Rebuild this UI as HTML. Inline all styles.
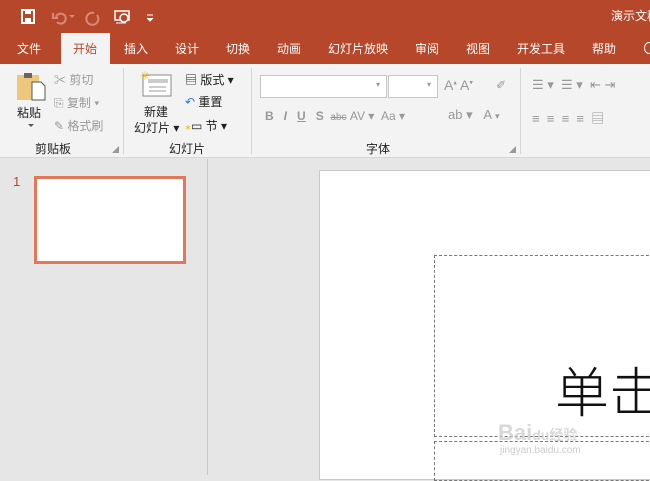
<!DOCTYPE html>
<html><head><meta charset="utf-8"><style>
*{margin:0;padding:0;box-sizing:border-box}
body{width:650px;height:475px;overflow:hidden;position:relative;font-family:"Liberation Sans","Noto Sans CJK SC",sans-serif;background:#e6e6e6}
.a{position:absolute}
.t{font-size:12px;color:#fff;white-space:nowrap}
.r{font-size:12px;color:#222;white-space:nowrap}
.g{font-size:12px;color:#999;white-space:nowrap}
</style></head><body>
<div class="a" style="left:0;top:0;width:650px;height:64px;background:#b7472a"></div>
<svg class="a" style="left:20px;top:8px" width="140" height="18">
<rect x="2" y="2" width="12" height="13" fill="none" stroke="#fff" stroke-width="2"/><rect x="5" y="2" width="6" height="4" fill="#fff"/><rect x="5" y="10" width="6" height="5" fill="#fff"/>
<path d="M36 9 a5 5 0 1 1 1 5 M33 5 v5 h5" fill="none" stroke="#d9897a" stroke-width="2"/>
<path d="M49 7 l3 3 l3-3" fill="#d9897a"/>
<path d="M74 5 a6 6 0 1 0 3 2" fill="none" stroke="#d9897a" stroke-width="2"/>
<rect x="95" y="3" width="14" height="9" fill="none" stroke="#fff" stroke-width="1.5"/><circle cx="104" cy="10" r="4" fill="#b7472a" stroke="#fff" stroke-width="1.5"/><path d="M96 15h10" stroke="#fff"/>
<path d="M127 7h6 M127 10l3 3l3-3" stroke="#fff" fill="#fff"/>
</svg>
<div class="a t" style="left:611px;top:7px">演示文稿</div>
<div class="a" style="left:61px;top:33px;width:49px;height:31px;background:#f3f3f3"></div>
<div class="a t" style="left:17px;top:40px">文件</div>
<div class="a" style="left:73px;top:40px;font-size:12px;color:#b7472a">开始</div>
<div class="a t" style="left:124px;top:40px">插入</div>
<div class="a t" style="left:175px;top:40px">设计</div>
<div class="a t" style="left:226px;top:40px">切换</div>
<div class="a t" style="left:277px;top:40px">动画</div>
<div class="a t" style="left:328px;top:40px">幻灯片放映</div>
<div class="a t" style="left:415px;top:40px">审阅</div>
<div class="a t" style="left:466px;top:40px">视图</div>
<div class="a t" style="left:517px;top:40px">开发工具</div>
<div class="a t" style="left:592px;top:40px">帮助</div>
<div class="a" style="left:644px;top:42px;width:10px;height:12px;border:1.5px solid #fff;border-radius:50%"></div>
<div class="a" style="left:0;top:64px;width:650px;height:94px;background:#f3f3f3;border-bottom:1px solid #d6d6d6"></div>
<div class="a" style="left:123px;top:68px;width:1px;height:86px;background:#d6d6d6"></div>
<div class="a" style="left:251px;top:68px;width:1px;height:86px;background:#d6d6d6"></div>
<div class="a" style="left:520px;top:68px;width:1px;height:86px;background:#d6d6d6"></div>
<svg class="a" style="left:16px;top:70px" width="30" height="32"><rect x="1" y="5" width="22" height="25" fill="#efc77c"/><rect x="8" y="3" width="8" height="5" fill="#666"/><path d="M16 12h9l4 4v14h-13z" fill="#fff" stroke="#555"/></svg>
<div class="a r" style="left:17px;top:104px">粘贴</div>
<div class="a" style="left:28px;top:124px;border:3px solid transparent;border-top-color:#555"></div>
<div class="a g" style="left:54px;top:71px">✂ 剪切</div>
<div class="a g" style="left:54px;top:94px">⎘ 复制 ▾</div>
<div class="a g" style="left:54px;top:117px">✎ 格式刷</div>
<div class="a r" style="left:35px;top:140px">剪贴板</div>
<div class="a g" style="left:112px;top:145px;font-size:7px">◢</div>
<svg class="a" style="left:140px;top:70px" width="32" height="28"><rect x="3" y="5" width="28" height="21" fill="#fff" stroke="#888"/><rect x="8" y="9" width="20" height="4" fill="#ccc"/><path d="M9 17h17M9 21h17" stroke="#999"/><text x="0" y="10" font-size="12" fill="#f5b800">✳</text></svg>
<div class="a r" style="left:144px;top:103px">新建</div>
<div class="a r" style="left:134px;top:119px">幻灯片 ▾</div>
<div class="a r" style="left:185px;top:71px">▤ 版式 ▾</div>
<div class="a r" style="left:185px;top:93px"><span style="color:#2b7cd3">↶</span> 重置</div>
<div class="a r" style="left:185px;top:117px"><span style="color:#f5b800">⁎</span>▭ 节 ▾</div>
<div class="a r" style="left:169px;top:140px">幻灯片</div>
<div class="a" style="left:260px;top:75px;width:127px;height:23px;background:#fff;border:1px solid #c6c6c6"></div>
<div class="a" style="left:388px;top:75px;width:50px;height:23px;background:#fff;border:1px solid #c6c6c6"></div>
<div class="a g" style="left:376px;top:80px;font-size:8px">▾</div>
<div class="a g" style="left:427px;top:80px;font-size:8px">▾</div>
<div class="a g" style="left:444px;top:77px;font-size:14px">A<sup style="font-size:7px">▴</sup> A<sup style="font-size:7px">▾</sup></div>
<div class="a g" style="left:496px;top:78px">✐</div>
<div class="a g" style="left:265px;top:109px;font-weight:bold;letter-spacing:0">B&nbsp;&nbsp;&nbsp;<i>I</i>&nbsp;&nbsp;&nbsp;<u>U</u>&nbsp;&nbsp;&nbsp;S&nbsp;&nbsp;<span style="font-size:10px;font-weight:normal;text-decoration:line-through">abc</span>&nbsp;<span style="font-weight:normal">AV ▾&nbsp;&nbsp;Aa ▾</span></div>
<div class="a g" style="left:448px;top:107px;font-size:13px">ab ▾&nbsp;&nbsp;&nbsp;A <span style="font-size:9px">▾</span></div>
<div class="a r" style="left:366px;top:140px">字体</div>
<div class="a g" style="left:509px;top:145px;font-size:7px">◢</div>
<div class="a g" style="left:532px;top:77px;font-size:13px">☰ ▾&nbsp;&nbsp;☰ ▾&nbsp;&nbsp;⇤ ⇥</div>
<div class="a g" style="left:532px;top:108px;font-size:13px">≡&nbsp;&nbsp;≡&nbsp;&nbsp;≡&nbsp;&nbsp;≡&nbsp;&nbsp;▤</div>
<div class="a" style="left:207px;top:159px;width:1px;height:316px;background:#c8c8c8"></div>
<div class="a" style="left:13px;top:174px;font-size:13px;color:#b7472a">1</div>
<div class="a" style="left:34px;top:176px;width:152px;height:88px;background:#fff;border:3px solid #e3775a"></div>
<div class="a" style="left:319px;top:170px;width:340px;height:310px;background:#fff;border:1px solid #c8c8c8"></div>
<div class="a" style="left:434px;top:255px;width:230px;height:182px;border:1px dashed #777"></div>
<div class="a" style="left:434px;top:441px;width:230px;height:40px;border:1px dashed #777"></div>
<div class="a" style="left:555px;top:364px;font-size:54px;line-height:60px;color:#111;font-weight:300;white-space:nowrap">单击</div>
<div class="a" style="left:498px;top:420px;font-size:22px;color:rgba(200,200,200,.7);font-weight:bold;white-space:nowrap">Bai<span style="font-size:14px">du经验</span></div>
<div class="a" style="left:500px;top:445px;font-size:10px;color:rgba(190,190,190,.8)">jingyan.baidu.com</div>
</body></html>
